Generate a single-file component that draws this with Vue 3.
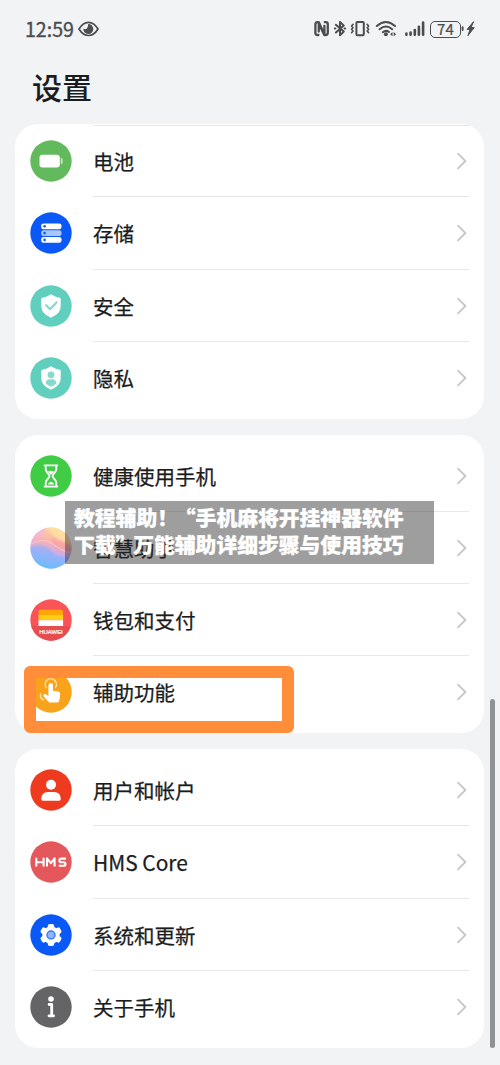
<script setup>
const groups = [
  [
    { id: 'battery', label: '电池', color: '#62ba5c' },
    { id: 'storage', label: '存储', color: '#0a59f7' },
    { id: 'security', label: '安全', color: '#61cfbe' },
    { id: 'privacy', label: '隐私', color: '#61cfbe' },
  ],
  [
    { id: 'balance', label: '健康使用手机', color: '#41cc45' },
    { id: 'assistant', label: '智慧助手', color: '#c3b4ee' },
    { id: 'wallet', label: '钱包和支付', color: '#fb5458' },
    { id: 'access', label: '辅助功能', color: '#f9a21b' },
  ],
  [
    { id: 'users', label: '用户和帐户', color: '#ee3b20' },
    { id: 'hms', label: 'HMS Core', color: '#e4575b', latin: true },
    { id: 'system', label: '系统和更新', color: '#0a59f7' },
    { id: 'about', label: '关于手机', color: '#646466' },
  ],
]
const teeth = [0, 60, 120, 180, 240, 300]
</script>

<template>
  <main class="screen" lang="zh-CN">
    <header class="status">
      <span class="clock">12:59</span>
      <svg class="eye" width="21" height="16" viewBox="0 0 21 16">
        <path d="M1 8Q5 1.4 10.5 1.4T20 8Q16 14.5 10.5 14.5T1 8Z" fill="none" stroke="#4b4d4f" stroke-width="1.7" />
        <path d="M10.2 3A5 5 0 1 1 5.3 7.6Q8 8.9 9 7.2Q10.4 5.3 10.2 3Z" fill="#4b4d4f" />
      </svg>
      <div class="signals">
        <svg width="116" height="20" viewBox="0 0 116 20" fill="none" stroke="#4b4d4f" stroke-linecap="round" stroke-linejoin="round">
          <g stroke-width="2.3">
            <path d="M4.4 16H3.4Q1.4 16 1.4 13.9V5.5Q1.4 3.2 3.6 3.2L4.8 3.2L10.4 15.6V6.8" />
            <path d="M10.8 3.2H11.8Q13.8 3.2 13.8 5.3V13.7Q13.8 16 11.6 16H10.4L4.8 4.4V12.6" />
          </g>
          <path d="M21.9 5.7L29.8 12.6L26 16.3V2.9L29.8 6.6L21.9 13.5M20.8 9.6H21.4M30.6 9.6H31.2" stroke-width="2" />
          <rect x="42.4" y="3" width="7.4" height="13.2" rx="1" stroke-width="2" />
          <path d="M39 5.4L37.6 7L39 8.7L37.6 10.3L39 12L37.6 13.7M53.2 5.4L54.6 7L53.2 8.7L54.6 10.3L53.2 12L54.6 13.7" stroke-width="1.6" />
          <path d="M62.8 7Q72 -1 81 7M65.6 10.3Q72 4.8 78.2 10.3M68.8 13.2Q72 10.6 75 13" stroke-width="2" />
          <circle cx="71.9" cy="15.2" r="2" fill="#4b4d4f" stroke="none" />
          <path d="M78.5 13.1L76.1 15.2L78.5 17.3ZM79.7 13.1L82.1 15.2L79.7 17.3Z" fill="#4b4d4f" stroke="none" />
          <path d="M92.4 15.8V14.6M96.6 15.8V13.5M100.8 15.8V11.1M104.9 15.8V7.7M109.1 15.8V3.5" stroke-width="2.6" />
        </svg>
        <span class="charge">74</span>
        <svg width="15" height="20" viewBox="0 0 15 20" fill="none" stroke="#4b4d4f" stroke-linecap="round" stroke-linejoin="round">
          <path d="M1.6 8.3V11" stroke-width="1.9" />
          <path d="M12.3 3L6.1 10.4H9L6.9 16.7L13.2 8.6H10.3Z" fill="#4b4d4f" stroke-width="1" />
        </svg>
      </div>
    </header>
    <h1 class="title">设置</h1>

    <section v-for="(group, g) in groups" :key="g" class="card" :class="{ clipped: g === 0 }">
      <div v-for="item in group" :key="item.id" class="row">
        <svg class="icon" width="42" height="42" viewBox="-21 -21 42 42">
          <defs v-if="item.id === 'assistant'">
            <linearGradient id="orb" x1=".6" y1="0" x2=".4" y2="1">
              <stop offset="0" stop-color="#fbdc9c" />
              <stop offset=".35" stop-color="#f9b3b0" />
              <stop offset=".62" stop-color="#c5acf2" />
              <stop offset="1" stop-color="#5fc6f6" />
            </linearGradient>
            <filter id="soft" x="-30%" y="-30%" width="160%" height="160%"><feGaussianBlur stdDeviation="1.3" /></filter>
            <clipPath id="ball"><circle r="20.7" /></clipPath>
          </defs>
          <defs v-if="item.id === 'wallet'">
            <clipPath id="disc"><circle r="20.7" /></clipPath>
          </defs>
          <circle r="20.7" :fill="item.id === 'assistant' ? 'url(#orb)' : item.color" />

          <g v-if="item.id === 'battery'" fill="#fff">
            <rect x="-11.5" y="-6.2" width="20.3" height="12.6" rx="3" />
            <path d="M9.8 -3.3Q11.6 -3.3 11.6 -1.5V1.5Q11.6 3.3 9.8 3.3Z" opacity=".65" />
          </g>
          <g v-else-if="item.id === 'storage'">
            <rect x="-9.8" y="-9.6" width="20.3" height="5.8" rx="2.2" fill="#fff" />
            <rect x="-9.8" y="-2.8" width="20.3" height="5.8" rx="2.2" fill="#a8c6ff" />
            <rect x="-9.8" y="4" width="20.3" height="5.8" rx="2.2" fill="#fff" />
            <g fill="#0a59f7"><circle cx="-6.4" cy="-6.7" r="1.3" /><circle cx="-6.4" cy=".1" r="1.3" /><circle cx="-6.4" cy="6.9" r="1.3" /></g>
          </g>
          <g v-else-if="item.id === 'security' || item.id === 'privacy'">
            <path d="M0 -11.7Q4.8 -8.6 8.8 -8.3Q9.7 -8.2 9.7 -7V.5Q9.7 7.5 0 11.8Q-9.7 7.5 -9.7 .5V-7Q-9.7 -8.2 -8.8 -8.3Q-4.8 -8.6 0 -11.7Z" fill="#fff" />
            <path v-if="item.id === 'security'" d="M-4.9 -.8L-.9 3.2L5.6 -3.8" fill="none" stroke="#86d9cc" stroke-width="2.2" stroke-linecap="round" stroke-linejoin="round" />
            <g v-else fill="#86d9cc"><circle cy="-3.2" r="3.4" /><path d="M-5.4 5.2Q-4.8 1.3 -1.2 1.3H1.2Q4.8 1.3 5.4 5.2Q3.5 7.6 0 8.8Q-3.5 7.6 -5.4 5.2Z" /></g>
          </g>
          <g v-else-if="item.id === 'balance'">
            <path d="M-6.4 -10.6H6.4M-6.4 10.6H6.4M-5.3 -10.4V-7Q-5.3 -4.7 -2.1 -1.5Q-.8 0 -2.1 1.5Q-5.3 4.7 -5.3 7V10.4M5.3 -10.4V-7Q5.3 -4.7 2.1 -1.5Q.8 0 2.1 1.5Q5.3 4.7 5.3 7V10.4" fill="none" stroke="#fff" stroke-width="1.8" stroke-linecap="round" />
            <path d="M-3 -4.6Q0 -5.8 3 -4.6Q1 -2 0 -1.2Q-1 -2 -3 -4.6ZM-3.2 8.4Q-2.6 6.4 0 5.7Q2.6 6.4 3.2 8.4Z" fill="#fff" />
          </g>
          <g v-else-if="item.id === 'assistant'" clip-path="url(#ball)">
            <g filter="url(#soft)">
              <path d="M-22 -6Q-16 -20 -4 -22Q-6 -12 -22 -6Z" fill="#f3b6e2" opacity=".8" />
              <path d="M-3 -22Q0 -12 8 -9Q16 -6 22 -2V-22Z" fill="#fde2a0" opacity=".75" />
              <path d="M0 -10Q10 -8 21 0Q18 7 10 4Q2 0 0 -10Z" fill="#ff9a94" opacity=".5" />
              <path d="M-22 0Q-9 -6 0 3Q8 12 21 8Q14 22 0 22Q-19 20 -22 0Z" fill="#74b4ff" opacity=".5" />
            </g>
            <path d="M-20 -4Q-8 -11 2 -4Q9 2 19 5" fill="none" stroke="#fff" stroke-width="1.2" opacity=".3" />
          </g>
          <g v-else-if="item.id === 'wallet'">
            <rect x="-21" y="6" width="42" height="16" fill="#e74c51" clip-path="url(#disc)" />
            <path d="M-12.5 -8.3Q-12.5 -10.3 -10.5 -10.3H10.1Q12.1 -10.3 12.1 -8.3V-5H-12.5Z" fill="#ffa706" />
            <rect x="-12.5" y="-5" width="24.6" height="5.2" fill="#ffcd13" />
            <rect x="-12.5" y=".2" width="24.6" height="5.8" fill="#fff" />
            <text y="13.6" text-anchor="middle" textLength="23.5" lengthAdjust="spacingAndGlyphs" class="brand">HUAWEI</text>
          </g>
          <g v-else-if="item.id === 'access'">
            <path d="M-2.6 -6.6Q-2.6 -8.9 -.3 -8.9T2 -6.6V-1.3L7.3 -.4Q9.5 .2 9.2 2.4L8.3 8.4Q7.9 10.6 5.7 10.6H-.6Q-2.2 10.6 -3.1 9.3L-7.6 4.3Q-8.2 3 -7 2.2Q-5.8 1.6 -4.7 2.5L-2.6 4Z" fill="#fff" />
            <path d="M-4.9 -4.6A5.6 5.6 0 1 1 4.5 -4.6M-7.6 8Q-11.6 6 -10.2 1.6" fill="none" stroke="#ffe1ad" stroke-width="1.4" stroke-linecap="round" />
          </g>
          <g v-else-if="item.id === 'users'" fill="#fff">
            <circle cy="-5.2" r="5" />
            <path d="M-9.8 9Q-9.5 1.9 -3 1.9H3Q9.5 1.9 9.8 9Q9.8 10.7 8 10.7H-8Q-9.8 10.7 -9.8 9Z" />
          </g>
          <path v-else-if="item.id === 'hms'" d="M-14.7 -4.2V4.6M-7.4 -4.2V4.6M-14.7 .2H-7.4M-4 4.6V-3.6L-.2 1.2L3.6 -3.6V4.6M15 -3.4H10.3Q8.4 -3.4 8.4 -1.6T10.3 .2H12.6Q14.5 .2 14.5 2T12.6 3.8H7.8" fill="none" stroke="#fff" stroke-width="2.1" stroke-linejoin="round" />
          <g v-else-if="item.id === 'system'">
            <circle r="8.7" fill="#fff" />
            <rect v-for="angle in teeth" :key="angle" x="-3.2" y="-11.1" width="6.4" height="8" rx="2" fill="#fff" :transform="`rotate(${angle})`" />
            <circle r="4" fill="#8fb3fc" stroke="#3e7af7" stroke-width="1.5" />
          </g>
          <g v-else fill="#fff">
            <circle cy="-8" r="2.8" />
            <path d="M-1.9 -2.5H.7V8.6M-2 8.8H2.6" fill="none" stroke="#fff" stroke-width="2.8" stroke-linecap="round" stroke-linejoin="round" />
          </g>
        </svg>
        <div class="line">
          <span class="label" :class="{ latin: item.latin }">{{ item.label }}</span>
          <svg class="chevron" width="12" height="18" viewBox="0 0 12 18">
            <path d="M2 1.7L9.4 9L2 16.3" fill="none" stroke="#c5c6c8" stroke-width="1.8" stroke-linecap="round" stroke-linejoin="round" />
          </svg>
        </div>
      </div>
    </section>

    <div class="highlight"></div>
    <div class="caption">教程辅助！<span class="open">“</span>手机麻将开挂神器软件<br>下载<span class="close">”</span>万能辅助详细步骤与使用技巧</div>
    <div class="scrollbar"></div>
  </main>
</template>

<style>
body {
  margin: 0;
  background: #f1f3f5;
}
</style>

<style scoped>
.screen {
  position: relative;
  box-sizing: border-box;
  width: 500px;
  height: 1065px;
  overflow: hidden;
  background: #f1f3f5;
  color: #1b1c1d;
  font-family: "Noto Sans CJK SC", sans-serif;
}
.status {
  display: flex;
  align-items: center;
  height: 58px;
  padding: 0 24px 0 25px;
  color: #4b4d4f;
}
.clock {
  width: 53px;
  font: 400 19.6px/28px "Noto Sans CJK SC", sans-serif;
  white-space: nowrap;
  -webkit-text-stroke: 0.35px currentColor;
}
.signals {
  display: flex;
  align-items: center;
  margin-left: auto;
}
.charge {
  box-sizing: border-box;
  width: 31px;
  height: 17px;
  border: 1.5px solid #4b4d4f;
  border-radius: 5px;
  font: 400 15px/14px "Noto Sans CJK SC", sans-serif;
  letter-spacing: 0.2px;
  text-align: center;
  -webkit-text-stroke: 0.2px currentColor;
}
.brand {
  fill: #fff;
  font: 400 4.8px "Liberation Sans", sans-serif;
  stroke: #fff;
  stroke-width: 0.2px;
}
.title {
  height: 66px;
  margin: 0;
  padding-left: 32px;
  font-size: 30px;
  font-weight: 500;
  line-height: 56px;
  box-sizing: border-box;
}
.card {
  box-sizing: border-box;
  height: 298.5px;
  margin: 0 16px 16px 15px;
  padding: 5px 0 4.5px;
  border-radius: 23px;
  background: #fff;
}
.card.clipped {
  height: 294.5px;
  padding-top: 1px;
}
.row {
  display: flex;
  align-items: center;
  height: 72.25px;
  padding: 0 15px;
}
.icon {
  flex: none;
  margin-right: 21px;
}
.line {
  display: flex;
  flex: 1;
  align-items: center;
  justify-content: space-between;
  box-sizing: border-box;
  height: 100%;
  padding: 1px 1px 0 0;
  border-bottom: 1px solid #e6e7e8;
}
.row:last-child .line {
  border-bottom-color: transparent;
}
.clipped .row:first-child .line {
  padding-top: 0;
  border-top: 1px solid #e6e7e8;
}
.label {
  font-size: 20.5px;
  font-weight: 400;
  line-height: 28px;
  -webkit-text-stroke: 0.25px currentColor;
}
.label.latin {
  font-size: 20.9px;
}
.highlight {
  position: absolute;
  top: 666px;
  left: 24px;
  box-sizing: border-box;
  width: 270px;
  height: 67px;
  border: 12px solid #ff8d39;
  border-radius: 6px;
}
.caption {
  position: absolute;
  top: 501px;
  left: 65px;
  box-sizing: border-box;
  width: 369px;
  height: 63px;
  padding: 3px 9px;
  background: rgba(40, 40, 40, 0.45);
  color: #fff;
  font-size: 20.8px;
  font-weight: 900;
  line-height: 26.5px;
  white-space: nowrap;
  -webkit-text-stroke: 0.3px #fff;
}
.open {
  margin-left: -3.2px;
}
.close {
  margin-right: -3.2px;
}
.scrollbar {
  position: absolute;
  top: 699px;
  left: 489.5px;
  width: 5.5px;
  height: 349px;
  border-radius: 3px;
  background: #8f9294;
}
</style>
